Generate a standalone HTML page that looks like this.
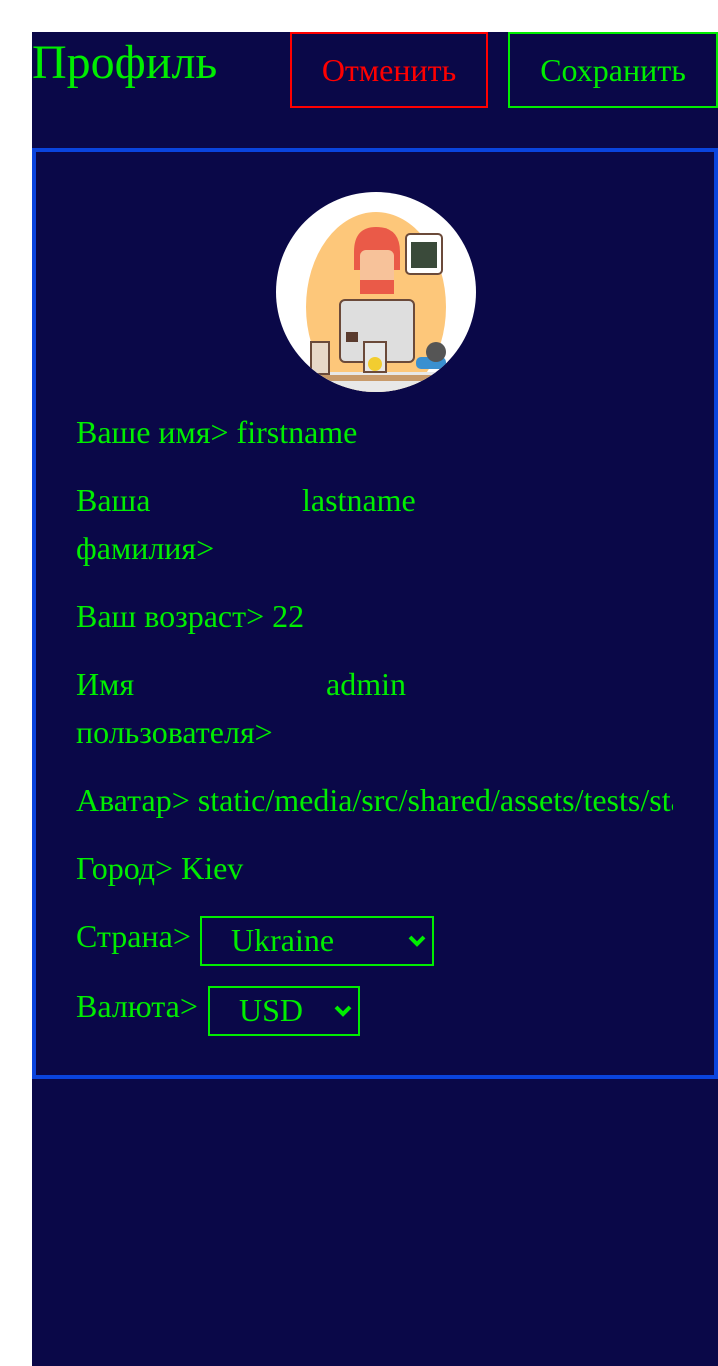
<!DOCTYPE html>
<html><head><meta charset="utf-8"><style>
html,body{margin:0;padding:0;background:#fff;width:718px;height:1366px;overflow:hidden}
body{position:relative;font-family:"Liberation Serif","Noto Serif CJK SC",serif;color:#00ee00}
.panel{position:absolute;left:32px;top:32px;width:686px;height:1334px;background:#0a0848}
.t{position:absolute;white-space:nowrap;font-size:32px;line-height:48px}
.btn{position:absolute;top:32px;height:76px;box-sizing:border-box;border:2px solid;font-size:32px;display:flex;align-items:center;justify-content:center}
.card{position:absolute;left:32px;top:148px;width:686px;height:931px;box-sizing:border-box;border:4px solid #0a44dd}
.sel{position:absolute;box-sizing:border-box;border:2px solid #00ee00;height:50px;font-size:32px;line-height:44px}
.sel span{position:absolute;left:29px}
.sel svg{position:absolute;top:16px}
</style></head><body>
<div class="panel"></div>
<div class="t" style="left:32px;top:38px;font-size:48px;line-height:50px">Профиль</div>
<div class="btn" style="left:290px;width:198px;border-color:#ff0000;color:#ff0000">Отменить</div>
<div class="btn" style="left:508px;width:210px;border-color:#00ee00;color:#00ee00">Сохранить</div>
<div class="card"></div>
<svg style="position:absolute;left:276px;top:192px" width="200" height="200" viewBox="0 0 200 200">
<defs><clipPath id="c"><circle cx="100" cy="100" r="100"/></clipPath></defs>
<circle cx="100" cy="100" r="100" fill="#fff"/>
<g clip-path="url(#c)">
<ellipse cx="100" cy="115" rx="70" ry="95" fill="#fdc77a"/>
<rect x="0" y="180" width="200" height="20" fill="#e8e8e8"/>
<rect x="20" y="183" width="165" height="6" fill="#c89a6a"/>
<path d="M78 60 Q78 35 100 35 Q124 35 124 60 L124 78 L78 78Z" fill="#ea5a48"/>
<rect x="84" y="58" width="34" height="40" rx="6" fill="#f7c29a"/>
<rect x="84" y="88" width="34" height="14" fill="#ea5a48"/>
<rect x="64" y="108" width="74" height="62" rx="5" fill="#dedede" stroke="#6b4a3a" stroke-width="2"/>
<rect x="88" y="150" width="22" height="30" fill="#e8e8e8" stroke="#6b4a3a" stroke-width="2"/>
<circle cx="99" cy="172" r="7" fill="#f2cd30"/>
<rect x="70" y="140" width="12" height="10" fill="#5a3b2e"/>
<rect x="130" y="42" width="36" height="40" rx="4" fill="#fff" stroke="#6b4a3a" stroke-width="2"/>
<rect x="135" y="50" width="26" height="26" fill="#3a4a3a"/>
<rect x="35" y="150" width="18" height="32" fill="#e8d8c8" stroke="#6b4a3a" stroke-width="2"/>
<rect x="140" y="165" width="30" height="12" rx="5" fill="#3a90d0"/>
<circle cx="160" cy="160" r="10" fill="#555"/>
</g></svg>
<div class="t" style="left:76px;top:408px">Ваше имя&gt; firstname</div>
<div class="t" style="left:76px;top:476px">Ваша</div>
<div class="t" style="left:76px;top:524px">фамилия&gt;</div>
<div class="t" style="left:302px;top:476px">lastname</div>
<div class="t" style="left:76px;top:592px">Ваш возраст&gt; 22</div>
<div class="t" style="left:76px;top:660px">Имя</div>
<div class="t" style="left:76px;top:708px">пользователя&gt;</div>
<div class="t" style="left:326px;top:660px">admin</div>
<div class="t" style="left:76px;top:776px;width:597px;overflow:hidden">Аватар&gt; static/media/src/shared/assets/tests/static/avatar.jpg</div>
<div class="t" style="left:76px;top:844px">Город&gt; Kiev</div>
<div class="t" style="left:76px;top:912px">Страна&gt;</div>
<div class="sel" style="left:200px;top:916px;width:234px"><span>Ukraine</span><svg style="left:206px" width="18" height="14" viewBox="0 0 18 14"><path d="M2 3 L9 10 L16 3" stroke="#00ee00" stroke-width="4" fill="none"/></svg></div>
<div class="t" style="left:76px;top:982px">Валюта&gt;</div>
<div class="sel" style="left:208px;top:986px;width:152px"><span>USD</span><svg style="left:124px" width="18" height="14" viewBox="0 0 18 14"><path d="M2 3 L9 10 L16 3" stroke="#00ee00" stroke-width="4" fill="none"/></svg></div>
</body></html>
